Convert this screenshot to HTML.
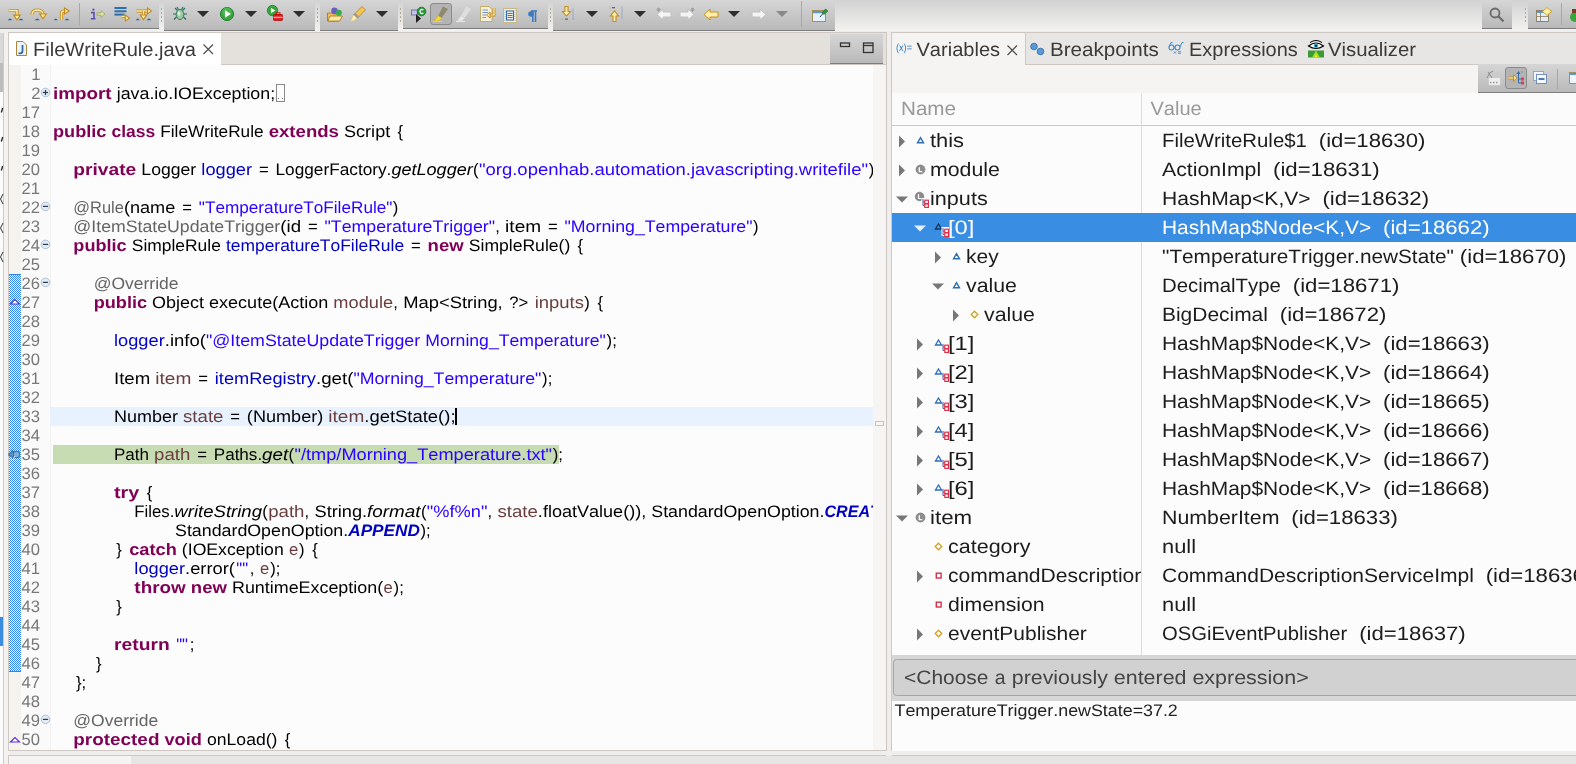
<!DOCTYPE html>
<html><head><meta charset="utf-8"><style>
html,body{margin:0;padding:0;width:1576px;height:764px;overflow:hidden;background:#efeeec}
svg{display:block;will-change:transform}
text{font-family:"Liberation Sans",sans-serif;white-space:pre;font-kerning:none}
</style></head><body>
<svg width="1576" height="764" viewBox="0 0 1576 764" text-rendering="geometricPrecision">
<defs>
<linearGradient id="tbg" x1="0" y1="0" x2="0" y2="1"><stop offset="0" stop-color="#d2d2d2"/><stop offset="1" stop-color="#f3f2f1"/></linearGradient>
<linearGradient id="grp" x1="0" y1="0" x2="0" y2="1"><stop offset="0" stop-color="#d6d6d6"/><stop offset="1" stop-color="#b8b8b8"/></linearGradient>
<pattern id="chk" width="2" height="2" patternUnits="userSpaceOnUse"><rect width="2" height="2" fill="#ffffff"/><rect width="1" height="1" fill="#2f86e8"/><rect x="1" y="1" width="1" height="1" fill="#2f86e8"/></pattern>
<clipPath id="codeclip"><rect x="50" y="65" width="823" height="685"/></clipPath>
<clipPath id="nameclip"><rect x="892" y="93" width="249" height="562"/></clipPath>
<clipPath id="valclip"><rect x="1142" y="93" width="434" height="562"/></clipPath>
</defs>
<rect x="0" y="0" width="1576" height="764" fill="#efeeec" shape-rendering="crispEdges"/>
<rect x="0" y="0" width="1576" height="31" fill="url(#tbg)" shape-rendering="crispEdges"/>
<rect x="0" y="31" width="1576" height="2" fill="#efeeec" shape-rendering="crispEdges"/>
<rect x="0" y="0" width="159" height="29" fill="url(#grp)" shape-rendering="crispEdges"/>
<rect x="0" y="28" width="159" height="1.2" fill="#7d7d7d" shape-rendering="crispEdges"/>
<rect x="164" y="0" width="151" height="31" fill="url(#grp)" shape-rendering="crispEdges"/>
<rect x="164" y="30" width="151" height="1.2" fill="#7d7d7d" shape-rendering="crispEdges"/>
<rect x="320" y="0" width="78" height="31" fill="url(#grp)" shape-rendering="crispEdges"/>
<rect x="320" y="30" width="78" height="1.2" fill="#7d7d7d" shape-rendering="crispEdges"/>
<rect x="403" y="0" width="145" height="29" fill="url(#grp)" shape-rendering="crispEdges"/>
<rect x="403" y="28" width="145" height="1.2" fill="#7d7d7d" shape-rendering="crispEdges"/>
<rect x="553" y="0" width="282" height="31" fill="url(#grp)" shape-rendering="crispEdges"/>
<rect x="553" y="30" width="282" height="1.2" fill="#7d7d7d" shape-rendering="crispEdges"/>
<rect x="1482" y="0" width="30" height="29" fill="url(#grp)" shape-rendering="crispEdges"/>
<rect x="1482" y="28" width="30" height="1.2" fill="#7d7d7d" shape-rendering="crispEdges"/>
<rect x="1528" y="0" width="48" height="29" fill="url(#grp)" shape-rendering="crispEdges"/>
<rect x="1528" y="28" width="48" height="1.2" fill="#7d7d7d" shape-rendering="crispEdges"/>
<rect x="160.7" y="8.2" width="1.6" height="1.6" fill="#b3a995" shape-rendering="crispEdges"/>
<rect x="160.7" y="12.2" width="1.6" height="1.6" fill="#b3a995" shape-rendering="crispEdges"/>
<rect x="160.7" y="16.2" width="1.6" height="1.6" fill="#b3a995" shape-rendering="crispEdges"/>
<rect x="160.7" y="20.2" width="1.6" height="1.6" fill="#b3a995" shape-rendering="crispEdges"/>
<rect x="316.7" y="8.2" width="1.6" height="1.6" fill="#b3a995" shape-rendering="crispEdges"/>
<rect x="316.7" y="12.2" width="1.6" height="1.6" fill="#b3a995" shape-rendering="crispEdges"/>
<rect x="316.7" y="16.2" width="1.6" height="1.6" fill="#b3a995" shape-rendering="crispEdges"/>
<rect x="316.7" y="20.2" width="1.6" height="1.6" fill="#b3a995" shape-rendering="crispEdges"/>
<rect x="399.7" y="8.2" width="1.6" height="1.6" fill="#b3a995" shape-rendering="crispEdges"/>
<rect x="399.7" y="12.2" width="1.6" height="1.6" fill="#b3a995" shape-rendering="crispEdges"/>
<rect x="399.7" y="16.2" width="1.6" height="1.6" fill="#b3a995" shape-rendering="crispEdges"/>
<rect x="399.7" y="20.2" width="1.6" height="1.6" fill="#b3a995" shape-rendering="crispEdges"/>
<rect x="549.7" y="8.2" width="1.6" height="1.6" fill="#b3a995" shape-rendering="crispEdges"/>
<rect x="549.7" y="12.2" width="1.6" height="1.6" fill="#b3a995" shape-rendering="crispEdges"/>
<rect x="549.7" y="16.2" width="1.6" height="1.6" fill="#b3a995" shape-rendering="crispEdges"/>
<rect x="549.7" y="20.2" width="1.6" height="1.6" fill="#b3a995" shape-rendering="crispEdges"/>
<rect x="1524.7" y="8.2" width="1.6" height="1.6" fill="#b3a995" shape-rendering="crispEdges"/>
<rect x="1524.7" y="12.2" width="1.6" height="1.6" fill="#b3a995" shape-rendering="crispEdges"/>
<rect x="1524.7" y="16.2" width="1.6" height="1.6" fill="#b3a995" shape-rendering="crispEdges"/>
<rect x="1524.7" y="20.2" width="1.6" height="1.6" fill="#b3a995" shape-rendering="crispEdges"/>
<line x1="79.5" y1="3" x2="79.5" y2="25" stroke="#a8a8a8" stroke-width="1" shape-rendering="crispEdges"/>
<g transform="translate(8,7)"><path d="M0.5 3.5 H9 V9" fill="none" stroke="#c68a1c" stroke-width="3.2" stroke-linecap="butt" stroke-linejoin="miter"/><path d="M0.5 3.5 H9 V9" fill="none" stroke="#fff0a8" stroke-width="1.4" stroke-linecap="butt" stroke-linejoin="miter"/><path d="M5.75 8.2 L12.25 8.2 L9 13.0 Z" fill="#fff0a8" stroke="#c68a1c" stroke-width="1.2" stroke-linejoin="miter"/><path d="M-0.3 13.2 Q2.0 9.6 4.3 13.2 Z" fill="#2f6aa8"/><path d="M10.7 13.2 Q13.0 9.6 15.3 13.2 Z" fill="#2f6aa8"/></g>
<g transform="translate(31,7)"><path d="M1 7.5 C1 1.5 12 1.5 12 7.5" fill="none" stroke="#c68a1c" stroke-width="3.2" stroke-linecap="butt" stroke-linejoin="miter"/><path d="M1 7.5 C1 1.5 12 1.5 12 7.5" fill="none" stroke="#fff0a8" stroke-width="1.4" stroke-linecap="butt" stroke-linejoin="miter"/><path d="M8.75 7 L15.25 7 L12 11.8 Z" fill="#fff0a8" stroke="#c68a1c" stroke-width="1.2" stroke-linejoin="miter"/><path d="M3.7 13.2 Q6.25 9.6 8.8 13.2 Z" fill="#2f6aa8"/></g>
<g transform="translate(54,7)"><path d="M-0.3 13.2 Q1.75 9.6 3.8 13.2 Z" fill="#2f6aa8"/><path d="M10.7 13.2 Q13.0 9.6 15.3 13.2 Z" fill="#2f6aa8"/><path d="M7.5 12.5 V6 Q7.5 4 10 4 H11" fill="none" stroke="#c68a1c" stroke-width="3.2" stroke-linecap="butt" stroke-linejoin="miter"/><path d="M7.5 12.5 V6 Q7.5 4 10 4 H11" fill="none" stroke="#fff0a8" stroke-width="1.4" stroke-linecap="butt" stroke-linejoin="miter"/><path d="M10.5 1 L15 4 L10.5 7 Z" fill="#fff0a8" stroke="#c68a1c" stroke-width="1.2"/></g>
<g transform="translate(90,7)"><path d="M1.5 5.5 H4 V11.5 M0.8 11.8 H5.5 M1 5.6 H4" stroke="#5a4fb0" stroke-width="1.6" fill="none"/><circle cx="3.4" cy="2.7" r="1.1" fill="#5a4fb0"/><path d="M7 5.8 H11 V3.5 L15 7 L11 10.5 V8.2 H7 Z" fill="#dfe3a0" stroke="#a2a86a" stroke-width="0.9"/></g>
<g transform="translate(114,7)"><rect x="0.5" y="0" width="12" height="2" fill="#2d6db0"/><rect x="0.5" y="3.3" width="12" height="2" fill="#2d6db0"/><rect x="0.5" y="6.6" width="10" height="2" fill="#2d6db0"/><path d="M7 10 Q10 8.5 12.5 10.5" fill="none" stroke="#c68a1c" stroke-width="3" stroke-linecap="butt" stroke-linejoin="miter"/><path d="M7 10 Q10 8.5 12.5 10.5" fill="none" stroke="#fff0a8" stroke-width="1.3" stroke-linecap="butt" stroke-linejoin="miter"/><path d="M11 8 L15.5 11 L11.5 14 Z" fill="#fff0a8" stroke="#c68a1c" stroke-width="1.1"/></g>
<g transform="translate(136,7)"><path d="M-0.3 13.2 Q1.75 9.6 3.8 13.2 Z" fill="#2f6aa8"/><path d="M10.7 13.2 Q13.0 9.6 15.3 13.2 Z" fill="#2f6aa8"/><path d="M0.5 4 H12" fill="none" stroke="#c68a1c" stroke-width="3.2" stroke-linecap="butt" stroke-linejoin="miter"/><path d="M0.5 4 H12" fill="none" stroke="#fff0a8" stroke-width="1.4" stroke-linecap="butt" stroke-linejoin="miter"/><path d="M7.5 4 V8.5" fill="none" stroke="#c68a1c" stroke-width="3.2" stroke-linecap="butt" stroke-linejoin="miter"/><path d="M7.5 4 V8.5" fill="none" stroke="#fff0a8" stroke-width="1.4" stroke-linecap="butt" stroke-linejoin="miter"/><path d="M4.35 8 L10.65 8 L7.5 12.6 Z" fill="#fff0a8" stroke="#c68a1c" stroke-width="1.2" stroke-linejoin="miter"/><path d="M11.5 1 L15.5 4 L11.5 7 Z" fill="#fff0a8" stroke="#c68a1c" stroke-width="1.1"/></g>
<g transform="translate(172,6)"><path d="M3 2 L5.5 4.5 M13 2 L10.5 4.5 M1 8 H4 M15 8 H12 M2 13.5 L4.5 11 M14 13.5 L11.5 11 M5 1 L6.5 3.5 M11 1 L9.5 3.5" stroke="#1e6e5e" stroke-width="1.1"/><ellipse cx="8" cy="8.5" rx="3.8" ry="5" fill="#9ec9a0" stroke="#2a7a66" stroke-width="1"/><ellipse cx="7" cy="7.5" rx="1.5" ry="2.3" fill="#d8eed0"/></g>
<path d="M197 11 H209 L203 17 Z" fill="#2e2e2e"/>
<g transform="translate(220,7)"><circle cx="7" cy="7" r="6.6" fill="#3aa640" stroke="#1d7a2a" stroke-width="0.9"/><circle cx="7" cy="5" r="4.6" fill="#5cc060" opacity="0.6"/><path d="M5 3.2 L10.8 7 L5 10.8 Z" fill="#fff"/></g>
<path d="M245 11 H257 L251 17 Z" fill="#2e2e2e"/>
<g transform="translate(267,5)"><circle cx="5.5" cy="5.5" r="5.2" fill="#3aa640" stroke="#1d7a2a" stroke-width="0.8"/><path d="M4 3 L8.3 5.5 L4 8 Z" fill="#fff"/><rect x="6.5" y="9.5" width="9" height="6" rx="0.8" fill="#e02020" stroke="#a00" stroke-width="0.7"/><rect x="9" y="7.8" width="4" height="2" fill="none" stroke="#c00" stroke-width="0.9"/><line x1="6.5" y1="12.3" x2="15.5" y2="12.3" stroke="#fff" stroke-width="0.8"/></g>
<path d="M293 11 H305 L299 17 Z" fill="#2e2e2e"/>
<g transform="translate(327,7)"><path d="M0.5 6 H5 L6 7 H12 V14 H0.5 Z" fill="#f0c060" stroke="#b07820" stroke-width="0.9"/><path d="M0.8 14 L3 9 H15.5 L12.5 14 Z" fill="#ffe8a8" stroke="#b07820" stroke-width="0.9"/><circle cx="7.5" cy="3.8" r="3.2" fill="#6a5cc0"/><circle cx="11.8" cy="5.8" r="3" fill="#3aa850"/></g>
<g transform="translate(350,6)"><path d="M12 0.5 L15.5 4 L7 12.5 L3.5 9 Z" fill="#f3c552" stroke="#b48a22" stroke-width="0.9"/><path d="M5.5 7 L9 10.5 L7 12.5 L3.5 9 Z" fill="#9a9a9a"/><path d="M3.5 9 L7 12.5 L1 15.5 Z" fill="#fff6c0" stroke="#e8d070" stroke-width="0.6"/></g>
<path d="M376 11 H388 L382 17 Z" fill="#2e2e2e"/>
<g transform="translate(411,7)"><rect x="0.5" y="3" width="6" height="5" fill="#b9c6ea" stroke="#7a5a9a" stroke-width="0.8"/><path d="M5 7 L10 11.5 L5 16 Z" fill="#222"/><circle cx="10.5" cy="4.5" r="4.3" fill="#2a9a3a" stroke="#176a24" stroke-width="0.8"/><path d="M12.3 3 A2 2 0 1 0 12.3 6" stroke="#fff" stroke-width="1.2" fill="none"/></g>
<rect x="430.5" y="3.5" width="21" height="21" rx="2.5" fill="#b4b4b4" stroke="#8c8c8c" stroke-width="1"/>
<g transform="translate(433,6)"><path d="M10 0.5 L15 3 L8.5 12 L5 10 Z" fill="#8c8468" opacity="0.9"/><path d="M5 9.5 L9 12 L6 15 H1 Z" fill="#f1d640" stroke="#c9a820" stroke-width="0.6"/><line x1="0" y1="15.5" x2="9" y2="15.5" stroke="#f1d640" stroke-width="1"/></g>
<g transform="translate(456,6)"><path d="M10 0.5 L15 3 L8.5 12 L5 10 Z" fill="#e0e0e0" opacity="0.9"/><path d="M5 9.5 L9 12 L6 15 H1 Z" fill="#e8e8e8" stroke="#c8c8c8" stroke-width="0.6"/><line x1="0" y1="15.5" x2="9" y2="15.5" stroke="#e8e8e8" stroke-width="1"/></g>
<g transform="translate(480,6)"><path d="M0.5 0.5 H9 L12 3.5 V15.5 H0.5 Z" fill="#f4f0dc" stroke="#c0a860" stroke-width="0.9"/><path d="M2.5 4 H8 M2.5 6.5 H8 M2.5 9 H6 M2.5 11.5 H6" stroke="#6a8ac8" stroke-width="0.9"/><path d="M14 2 V9 H9" fill="none" stroke="#c68a1c" stroke-width="2.8" stroke-linecap="butt" stroke-linejoin="miter"/><path d="M14 2 V9 H9" fill="none" stroke="#fff0a8" stroke-width="1.2" stroke-linecap="butt" stroke-linejoin="miter"/><path d="M10 6 L6.5 9 L10 12 Z" fill="#fff0a8" stroke="#c68a1c" stroke-width="1"/></g>
<g transform="translate(503,7)"><rect x="0.5" y="1.5" width="13" height="14" fill="#f2efe0" stroke="#c8b478" stroke-width="0.9"/><rect x="3.5" y="4" width="7" height="9" fill="none" stroke="#2d6db0" stroke-width="1.1"/><path d="M4.5 6.5 H9.5 M4.5 8.5 H9.5 M4.5 10.5 H9.5" stroke="#2d6db0" stroke-width="0.9"/><path d="M2 3 V14 M12 3 V14" stroke="#8aa8d0" stroke-width="0.8" stroke-dasharray="1 1"/></g>
<g transform="translate(526,8)"><path d="M5 3 H11 M6.8 3 V14 M9.5 3 V14" stroke="#3a7ac0" stroke-width="1.6"/><circle cx="5" cy="6" r="2.8" fill="#3a7ac0"/></g>
<g transform="translate(561,6)"><path d="M12 2 V14" stroke="#9aa8c0" stroke-width="0.9"/><path d="M1 14 V12 M13 14 V12" stroke="#9aa8c0" stroke-width="0.8"/><rect x="4" y="12.5" width="3" height="1.3" fill="#3a6ab0"/><path d="M4 0.5 H7 V5.5 H9.5 L5.5 10 L1.5 5.5 H4 Z" fill="#fff0a8" stroke="#c68a1c" stroke-width="1.1"/></g>
<path d="M586 11 H598 L592 17 Z" fill="#2e2e2e"/>
<g transform="translate(609,6)"><path d="M13 0.5 V13" stroke="#9aa8c0" stroke-width="0.9"/><rect x="3" y="1" width="3" height="1.3" fill="#3a6ab0"/><path d="M1 0.5 V3" stroke="#c8b478" stroke-width="0.8"/><path d="M7 3 V12" stroke="#c8d0e0" stroke-width="0.8" stroke-dasharray="1 1"/><path d="M4 15.5 H7 V10 H9.5 L5.5 5 L1.5 10 H4 Z" fill="#fff0a8" stroke="#c68a1c" stroke-width="1.1"/></g>
<path d="M634 11 H646 L640 17 Z" fill="#2e2e2e"/>
<g transform="translate(656,7)"><path d="M1 7.5 L7 2 V5 H15 V10 H7 V13 Z" fill="#f4f4f4" stroke="#c0c0c0" stroke-width="1" stroke-linejoin="round"/><path d="M2.5 0.5 V5 M0.5 2.7 H4.5 M1 1 L4 4 M4 1 L1 4" stroke="#999" stroke-width="0.8"/></g>
<g transform="translate(679,7)"><path d="M15 7.5 L9 2 V5 H1 V10 H9 V13 Z" fill="#f4f4f4" stroke="#c0c0c0" stroke-width="1" stroke-linejoin="round"/><path d="M13.5 0.5 V5 M11.5 2.7 H15.5 M12 1 L15 4 M15 1 L12 4" stroke="#999" stroke-width="0.8"/></g>
<g transform="translate(703,7)"><path d="M1 7.5 L7 2 V5 H15 V10 H7 V13 Z" fill="#fff0b0" stroke="#c8901a" stroke-width="1" stroke-linejoin="round"/></g>
<path d="M728 11 H740 L734 17 Z" fill="#2e2e2e"/>
<g transform="translate(751,7)"><path d="M15 7.5 L9 2 V5 H1 V10 H9 V13 Z" fill="#f4f4f4" stroke="#c0c0c0" stroke-width="1" stroke-linejoin="round"/></g>
<path d="M776 11 H788 L782 17 Z" fill="#8a8a8a"/>
<g transform="translate(812,8)"><rect x="0.5" y="2.5" width="13" height="11" fill="#e4f2fc" stroke="#a08850" stroke-width="0.9"/><rect x="1" y="3" width="12" height="2.2" fill="#5a96d0"/><path d="M8 9 L11 5.5" stroke="#333" stroke-width="0.9"/><path d="M10 5 L13.5 1 L16 3 L12 6.5 Z" fill="#2a9a3a" stroke="#1a6a20" stroke-width="0.6"/></g>
<g transform="translate(1489,7)"><circle cx="6" cy="6" r="4.5" fill="none" stroke="#6a6a6a" stroke-width="1.8"/><path d="M9.3 9.3 L14.5 14.5" stroke="#6a6a6a" stroke-width="2.2"/></g>
<g transform="translate(1536,7)"><rect x="0.5" y="3.5" width="12" height="11" fill="#dfeefa" stroke="#8a7a5a" stroke-width="0.9"/><rect x="1" y="4" width="11" height="2" fill="#5a96d0"/><path d="M4.5 6 V14 M1 9.5 H12" stroke="#8a7a5a" stroke-width="0.8"/><path d="M11 0.5 L13.5 3 L16 4.5 L13.5 6 L11 8.5 L8.5 6 L6 4.5 L8.5 3 Z" fill="#fff2a0" stroke="#c89a2a" stroke-width="0.9"/></g>
<g transform="translate(1569,6)"><circle cx="6" cy="11" r="5" fill="#3aa640"/><rect x="3" y="3" width="5" height="4" fill="#7a3a2a"/></g>
<line x1="801.5" y1="1" x2="801.5" y2="27" stroke="#a8a8a8" stroke-width="1" shape-rendering="crispEdges"/>
<line x1="1561.5" y1="3" x2="1561.5" y2="25" stroke="#a8a8a8" stroke-width="1" shape-rendering="crispEdges"/>
<rect x="0" y="33" width="3" height="30" fill="#d9d9d9" shape-rendering="crispEdges"/>
<rect x="0" y="63" width="3" height="29" fill="#bcbcbc" shape-rendering="crispEdges"/>
<rect x="0" y="92" width="3" height="660" fill="#fbfbfb" shape-rendering="crispEdges"/>
<rect x="0" y="617" width="3" height="28.5" fill="#3b8de2" shape-rendering="crispEdges"/>
<line x1="3.5" y1="33" x2="3.5" y2="764" stroke="#cfcac5" stroke-width="1" shape-rendering="crispEdges"/>
<path d="M2.6 108 Q2 111 1.2 112.5" stroke="#222" stroke-width="1.3" fill="none"/>
<path d="M2.6 137 Q2 140 1.2 141.5" stroke="#222" stroke-width="1.3" fill="none"/>
<path d="M2.6 166 Q2 169 1.2 170.5" stroke="#222" stroke-width="1.3" fill="none"/>
<path d="M3 194 L0.5 199 L3 204" stroke="#333" stroke-width="1" fill="none"/>
<path d="M3 223 L0.5 228 L3 233" stroke="#333" stroke-width="1" fill="none"/>
<path d="M3 252 L0.5 257 L3 262" stroke="#333" stroke-width="1" fill="none"/>
<rect x="4" y="33" width="4.5" height="731" fill="#f3f2f0" shape-rendering="crispEdges"/>
<rect x="8.5" y="32.5" width="878.0" height="718.0" fill="#fcfcfc" shape-rendering="crispEdges"/>
<rect x="9" y="33" width="877" height="31" fill="#e4e0dc" shape-rendering="crispEdges"/>
<line x1="9" y1="64.5" x2="886" y2="64.5" stroke="#cfc8c2" stroke-width="1" shape-rendering="crispEdges"/>
<rect x="9" y="33" width="212" height="32" fill="#ffffff" shape-rendering="crispEdges"/>
<rect x="830" y="34" width="53" height="30" fill="url(#grp)" shape-rendering="crispEdges"/>
<rect x="830" y="63" width="53" height="1" fill="#7d7d7d" shape-rendering="crispEdges"/>
<rect x="8.5" y="32.5" width="878.0" height="718.0" fill="none" stroke="#cfc8c2" stroke-width="1"/>
<rect x="9" y="65" width="12" height="685" fill="#f5f3f0" shape-rendering="crispEdges"/>
<rect x="21" y="65" width="29" height="685" fill="#fafafa" shape-rendering="crispEdges"/>
<line x1="50.5" y1="65" x2="50.5" y2="750" stroke="#f2f2f2" stroke-width="1" shape-rendering="crispEdges"/>
<rect x="873" y="65" width="13" height="685" fill="#f6f5f3" shape-rendering="crispEdges"/>
<text x="33.00" y="55.50" fill="#3a3a3a" font-size="19.42" textLength="162.85" lengthAdjust="spacingAndGlyphs">FileWriteRule.java</text>
<g transform="translate(16,41)"><path d="M0.5 0.5 H7 L10.5 4 V14.5 H0.5 Z" fill="#eef3fa" stroke="#a8863a" stroke-width="1"/><path d="M6.5 4 V10 Q6.5 12.3 4 12.3 H2.5" stroke="#2d6db0" stroke-width="1.8" fill="none"/></g>
<path d="M203.5 44.5 L213 54 M213 44.5 L203.5 54" stroke="#4a4a4a" stroke-width="1.1"/>
<rect x="840.5" y="43" width="9" height="3.5" fill="none" stroke="#333" stroke-width="1.3"/>
<rect x="863.5" y="43" width="9.5" height="9.5" fill="none" stroke="#333" stroke-width="1.3"/><line x1="863.5" y1="45.5" x2="873" y2="45.5" stroke="#333" stroke-width="1.3"/>
<rect x="50" y="407" width="823" height="19" fill="#e8f2fe" shape-rendering="crispEdges"/>
<rect x="53" y="445" width="506" height="19" fill="#c7dcb2" shape-rendering="crispEdges"/>
<rect x="9" y="274" width="12" height="398" fill="url(#chk)" shape-rendering="crispEdges"/>
<rect x="9" y="274" width="12" height="1" fill="#2f86e8" shape-rendering="crispEdges"/>
<rect x="9" y="671" width="12" height="1" fill="#2f86e8" shape-rendering="crispEdges"/>
<g clip-path="url(#codeclip)">
<text x="53.00" y="98.80" fill="#7f0055" font-size="16.64" textLength="58.65" lengthAdjust="spacingAndGlyphs" font-weight="bold">import</text>
<text x="116.72" y="98.80" fill="#000000" font-size="16.64" textLength="158.38" lengthAdjust="spacingAndGlyphs">java.io.IOException;</text>
<text x="53.00" y="136.80" fill="#7f0055" font-size="16.64" textLength="53.38" lengthAdjust="spacingAndGlyphs" font-weight="bold">public</text>
<text x="111.45" y="136.80" fill="#7f0055" font-size="16.64" textLength="43.71" lengthAdjust="spacingAndGlyphs" font-weight="bold">class</text>
<text x="160.23" y="136.80" fill="#000000" font-size="16.64" textLength="103.39" lengthAdjust="spacingAndGlyphs">FileWriteRule</text>
<text x="268.68" y="136.80" fill="#7f0055" font-size="16.64" textLength="70.28" lengthAdjust="spacingAndGlyphs" font-weight="bold">extends</text>
<text x="344.02" y="136.80" fill="#000000" font-size="16.64" textLength="46.19" lengthAdjust="spacingAndGlyphs">Script</text>
<text x="400.35" y="136.80" fill="#000000" font-size="16.64" text-anchor="middle">{</text>
<text x="73.34" y="174.80" fill="#7f0055" font-size="16.64" textLength="62.96" lengthAdjust="spacingAndGlyphs" font-weight="bold">private</text>
<text x="141.37" y="174.80" fill="#000000" font-size="16.64" textLength="54.90" lengthAdjust="spacingAndGlyphs">Logger</text>
<text x="201.34" y="174.80" fill="#0000c0" font-size="16.64" textLength="50.73" lengthAdjust="spacingAndGlyphs">logger</text>
<text x="263.80" y="174.80" fill="#000000" font-size="16.64" text-anchor="middle">=</text>
<text x="275.54" y="174.80" fill="#000000" font-size="16.64" textLength="115.87" lengthAdjust="spacingAndGlyphs">LoggerFactory.</text>
<text x="391.41" y="174.80" fill="#000000" font-size="16.64" textLength="81.33" lengthAdjust="spacingAndGlyphs" font-style="italic">getLogger</text>
<text x="475.85" y="174.80" fill="#000000" font-size="16.64" text-anchor="middle">(</text>
<text x="478.96" y="174.80" fill="#2a00ff" font-size="16.64" textLength="389.08" lengthAdjust="spacingAndGlyphs">&quot;org.openhab.automation.javascripting.writefile&quot;</text>
<text x="873.82" y="174.80" fill="#000000" font-size="16.64" text-anchor="middle">);</text>
<text x="73.34" y="212.80" fill="#646464" font-size="16.64" textLength="50.59" lengthAdjust="spacingAndGlyphs">@Rule</text>
<text x="123.93" y="212.80" fill="#000000" font-size="16.64" textLength="51.38" lengthAdjust="spacingAndGlyphs">(name</text>
<text x="187.05" y="212.80" fill="#000000" font-size="16.64" text-anchor="middle">=</text>
<text x="198.79" y="212.80" fill="#2a00ff" font-size="16.64" textLength="193.64" lengthAdjust="spacingAndGlyphs">&quot;TemperatureToFileRule&quot;</text>
<text x="395.53" y="212.80" fill="#000000" font-size="16.64" text-anchor="middle">)</text>
<text x="73.34" y="231.80" fill="#646464" font-size="16.64" textLength="206.94" lengthAdjust="spacingAndGlyphs">@ItemStateUpdateTrigger</text>
<text x="280.28" y="231.80" fill="#000000" font-size="16.64" textLength="20.76" lengthAdjust="spacingAndGlyphs">(id</text>
<text x="312.78" y="231.80" fill="#000000" font-size="16.64" text-anchor="middle">=</text>
<text x="324.52" y="231.80" fill="#2a00ff" font-size="16.64" textLength="170.46" lengthAdjust="spacingAndGlyphs">&quot;TemperatureTrigger&quot;</text>
<text x="497.51" y="231.80" fill="#000000" font-size="16.64" text-anchor="middle">,</text>
<text x="505.11" y="231.80" fill="#000000" font-size="16.64" textLength="35.99" lengthAdjust="spacingAndGlyphs">item</text>
<text x="552.84" y="231.80" fill="#000000" font-size="16.64" text-anchor="middle">=</text>
<text x="564.57" y="231.80" fill="#2a00ff" font-size="16.64" textLength="187.96" lengthAdjust="spacingAndGlyphs">&quot;Morning_Temperature&quot;</text>
<text x="755.65" y="231.80" fill="#000000" font-size="16.64" text-anchor="middle">)</text>
<text x="73.34" y="250.80" fill="#7f0055" font-size="16.64" textLength="53.38" lengthAdjust="spacingAndGlyphs" font-weight="bold">public</text>
<text x="131.79" y="250.80" fill="#000000" font-size="16.64" textLength="89.05" lengthAdjust="spacingAndGlyphs">SimpleRule</text>
<text x="225.91" y="250.80" fill="#0000c0" font-size="16.64" textLength="178.21" lengthAdjust="spacingAndGlyphs">temperatureToFileRule</text>
<text x="415.86" y="250.80" fill="#000000" font-size="16.64" text-anchor="middle">=</text>
<text x="427.60" y="250.80" fill="#7f0055" font-size="16.64" textLength="36.11" lengthAdjust="spacingAndGlyphs" font-weight="bold">new</text>
<text x="468.77" y="250.80" fill="#000000" font-size="16.64" textLength="101.49" lengthAdjust="spacingAndGlyphs">SimpleRule()</text>
<text x="580.40" y="250.80" fill="#000000" font-size="16.64" text-anchor="middle">{</text>
<text x="93.68" y="288.80" fill="#646464" font-size="16.64" textLength="84.81" lengthAdjust="spacingAndGlyphs">@Override</text>
<text x="93.68" y="307.80" fill="#7f0055" font-size="16.64" textLength="53.38" lengthAdjust="spacingAndGlyphs" font-weight="bold">public</text>
<text x="152.13" y="307.80" fill="#000000" font-size="16.64" textLength="51.86" lengthAdjust="spacingAndGlyphs">Object</text>
<text x="209.06" y="307.80" fill="#000000" font-size="16.64" textLength="119.24" lengthAdjust="spacingAndGlyphs">execute(Action</text>
<text x="333.38" y="307.80" fill="#6a3e3e" font-size="16.64" textLength="59.68" lengthAdjust="spacingAndGlyphs">module</text>
<text x="395.59" y="307.80" fill="#000000" font-size="16.64" text-anchor="middle">,</text>
<text x="403.20" y="307.80" fill="#000000" font-size="16.64" textLength="99.55" lengthAdjust="spacingAndGlyphs">Map&lt;String,</text>
<text x="518.71" y="307.80" fill="#000000" font-size="16.64" text-anchor="middle">?&gt;</text>
<text x="534.68" y="307.80" fill="#6a3e3e" font-size="16.64" textLength="49.27" lengthAdjust="spacingAndGlyphs">inputs</text>
<text x="587.05" y="307.80" fill="#000000" font-size="16.64" text-anchor="middle">)</text>
<text x="600.30" y="307.80" fill="#000000" font-size="16.64" text-anchor="middle">{</text>
<text x="114.02" y="345.80" fill="#0000c0" font-size="16.64" textLength="50.73" lengthAdjust="spacingAndGlyphs">logger</text>
<text x="164.75" y="345.80" fill="#000000" font-size="16.64" textLength="41.17" lengthAdjust="spacingAndGlyphs">.info(</text>
<text x="205.92" y="345.80" fill="#2a00ff" font-size="16.64" textLength="214.27" lengthAdjust="spacingAndGlyphs">&quot;@ItemStateUpdateTrigger</text>
<text x="425.25" y="345.80" fill="#2a00ff" font-size="16.64" textLength="180.64" lengthAdjust="spacingAndGlyphs">Morning_Temperature&quot;</text>
<text x="611.68" y="345.80" fill="#000000" font-size="16.64" text-anchor="middle">);</text>
<text x="114.02" y="383.80" fill="#000000" font-size="16.64" textLength="36.26" lengthAdjust="spacingAndGlyphs">Item</text>
<text x="155.34" y="383.80" fill="#6a3e3e" font-size="16.64" textLength="35.99" lengthAdjust="spacingAndGlyphs">item</text>
<text x="203.07" y="383.80" fill="#000000" font-size="16.64" text-anchor="middle">=</text>
<text x="214.81" y="383.80" fill="#0000c0" font-size="16.64" textLength="101.19" lengthAdjust="spacingAndGlyphs">itemRegistry</text>
<text x="316.01" y="383.80" fill="#000000" font-size="16.64" textLength="37.44" lengthAdjust="spacingAndGlyphs">.get(</text>
<text x="353.44" y="383.80" fill="#2a00ff" font-size="16.64" textLength="187.96" lengthAdjust="spacingAndGlyphs">&quot;Morning_Temperature&quot;</text>
<text x="547.19" y="383.80" fill="#000000" font-size="16.64" text-anchor="middle">);</text>
<text x="114.02" y="421.80" fill="#000000" font-size="16.64" textLength="63.96" lengthAdjust="spacingAndGlyphs">Number</text>
<text x="183.05" y="421.80" fill="#6a3e3e" font-size="16.64" textLength="40.36" lengthAdjust="spacingAndGlyphs">state</text>
<text x="235.15" y="421.80" fill="#000000" font-size="16.64" text-anchor="middle">=</text>
<text x="246.88" y="421.80" fill="#000000" font-size="16.64" textLength="76.40" lengthAdjust="spacingAndGlyphs">(Number)</text>
<text x="328.35" y="421.80" fill="#6a3e3e" font-size="16.64" textLength="35.99" lengthAdjust="spacingAndGlyphs">item</text>
<text x="364.34" y="421.80" fill="#000000" font-size="16.64" textLength="91.18" lengthAdjust="spacingAndGlyphs">.getState();</text>
<text x="114.02" y="459.80" fill="#000000" font-size="16.64" textLength="35.00" lengthAdjust="spacingAndGlyphs">Path</text>
<text x="154.08" y="459.80" fill="#6a3e3e" font-size="16.64" textLength="36.21" lengthAdjust="spacingAndGlyphs">path</text>
<text x="202.03" y="459.80" fill="#000000" font-size="16.64" text-anchor="middle">=</text>
<text x="213.77" y="459.80" fill="#000000" font-size="16.64" textLength="48.37" lengthAdjust="spacingAndGlyphs">Paths.</text>
<text x="262.14" y="459.80" fill="#000000" font-size="16.64" textLength="26.15" lengthAdjust="spacingAndGlyphs" font-style="italic">get</text>
<text x="291.39" y="459.80" fill="#000000" font-size="16.64" text-anchor="middle">(</text>
<text x="294.50" y="459.80" fill="#2a00ff" font-size="16.64" textLength="257.55" lengthAdjust="spacingAndGlyphs">&quot;/tmp/Morning_Temperature.txt&quot;</text>
<text x="557.84" y="459.80" fill="#000000" font-size="16.64" text-anchor="middle">);</text>
<text x="114.02" y="497.80" fill="#7f0055" font-size="16.64" textLength="25.33" lengthAdjust="spacingAndGlyphs" font-weight="bold">try</text>
<text x="149.49" y="497.80" fill="#000000" font-size="16.64" text-anchor="middle">{</text>
<text x="134.36" y="516.80" fill="#000000" font-size="16.64" textLength="40.03" lengthAdjust="spacingAndGlyphs">Files.</text>
<text x="174.39" y="516.80" fill="#000000" font-size="16.64" textLength="87.58" lengthAdjust="spacingAndGlyphs" font-style="italic">writeString</text>
<text x="265.08" y="516.80" fill="#000000" font-size="16.64" text-anchor="middle">(</text>
<text x="268.19" y="516.80" fill="#6a3e3e" font-size="16.64" textLength="36.21" lengthAdjust="spacingAndGlyphs">path</text>
<text x="306.93" y="516.80" fill="#000000" font-size="16.64" text-anchor="middle">,</text>
<text x="314.53" y="516.80" fill="#000000" font-size="16.64" textLength="52.60" lengthAdjust="spacingAndGlyphs">String.</text>
<text x="367.13" y="516.80" fill="#000000" font-size="16.64" textLength="53.43" lengthAdjust="spacingAndGlyphs" font-style="italic">format</text>
<text x="423.67" y="516.80" fill="#000000" font-size="16.64" text-anchor="middle">(</text>
<text x="426.78" y="516.80" fill="#2a00ff" font-size="16.64" textLength="60.60" lengthAdjust="spacingAndGlyphs">&quot;%f%n&quot;</text>
<text x="489.92" y="516.80" fill="#000000" font-size="16.64" text-anchor="middle">,</text>
<text x="497.52" y="516.80" fill="#6a3e3e" font-size="16.64" textLength="40.36" lengthAdjust="spacingAndGlyphs">state</text>
<text x="537.88" y="516.80" fill="#000000" font-size="16.64" textLength="108.33" lengthAdjust="spacingAndGlyphs">.floatValue()),</text>
<text x="651.28" y="516.80" fill="#000000" font-size="16.64" textLength="173.19" lengthAdjust="spacingAndGlyphs">StandardOpenOption.</text>
<text x="824.47" y="516.80" fill="#0000c0" font-size="16.64" textLength="66.04" lengthAdjust="spacingAndGlyphs" font-weight="bold" font-style="italic">CREATE</text>
<text x="175.04" y="535.80" fill="#000000" font-size="16.64" textLength="173.19" lengthAdjust="spacingAndGlyphs">StandardOpenOption.</text>
<text x="348.23" y="535.80" fill="#0000c0" font-size="16.64" textLength="71.63" lengthAdjust="spacingAndGlyphs" font-weight="bold" font-style="italic">APPEND</text>
<text x="425.66" y="535.80" fill="#000000" font-size="16.64" text-anchor="middle">);</text>
<text x="119.09" y="554.80" fill="#000000" font-size="16.64" text-anchor="middle">}</text>
<text x="129.22" y="554.80" fill="#7f0055" font-size="16.64" textLength="47.59" lengthAdjust="spacingAndGlyphs" font-weight="bold">catch</text>
<text x="181.89" y="554.80" fill="#000000" font-size="16.64" textLength="101.82" lengthAdjust="spacingAndGlyphs">(IOException</text>
<text x="293.67" y="554.80" fill="#6a3e3e" font-size="16.64" text-anchor="middle">e</text>
<text x="301.67" y="554.80" fill="#000000" font-size="16.64" text-anchor="middle">)</text>
<text x="314.92" y="554.80" fill="#000000" font-size="16.64" text-anchor="middle">{</text>
<text x="134.36" y="573.80" fill="#0000c0" font-size="16.64" textLength="50.73" lengthAdjust="spacingAndGlyphs">logger</text>
<text x="185.09" y="573.80" fill="#000000" font-size="16.64" textLength="49.84" lengthAdjust="spacingAndGlyphs">.error(</text>
<text x="242.26" y="573.80" fill="#2a00ff" font-size="16.64" text-anchor="middle">&quot;&quot;</text>
<text x="252.11" y="573.80" fill="#000000" font-size="16.64" text-anchor="middle">,</text>
<text x="264.61" y="573.80" fill="#6a3e3e" font-size="16.64" text-anchor="middle">e</text>
<text x="275.30" y="573.80" fill="#000000" font-size="16.64" text-anchor="middle">);</text>
<text x="134.36" y="592.80" fill="#7f0055" font-size="16.64" textLength="51.40" lengthAdjust="spacingAndGlyphs" font-weight="bold">throw</text>
<text x="190.83" y="592.80" fill="#7f0055" font-size="16.64" textLength="36.11" lengthAdjust="spacingAndGlyphs" font-weight="bold">new</text>
<text x="232.00" y="592.80" fill="#000000" font-size="16.64" textLength="151.12" lengthAdjust="spacingAndGlyphs">RuntimeException(</text>
<text x="388.02" y="592.80" fill="#6a3e3e" font-size="16.64" text-anchor="middle">e</text>
<text x="398.70" y="592.80" fill="#000000" font-size="16.64" text-anchor="middle">);</text>
<text x="119.09" y="611.80" fill="#000000" font-size="16.64" text-anchor="middle">}</text>
<text x="114.02" y="649.80" fill="#7f0055" font-size="16.64" textLength="55.65" lengthAdjust="spacingAndGlyphs" font-weight="bold">return</text>
<text x="182.06" y="649.80" fill="#2a00ff" font-size="16.64" text-anchor="middle">&quot;&quot;</text>
<text x="192.07" y="649.80" fill="#000000" font-size="16.64" text-anchor="middle">;</text>
<text x="98.75" y="668.80" fill="#000000" font-size="16.64" text-anchor="middle">}</text>
<text x="81.09" y="687.80" fill="#000000" font-size="16.64" text-anchor="middle">};</text>
<text x="73.34" y="725.80" fill="#646464" font-size="16.64" textLength="84.81" lengthAdjust="spacingAndGlyphs">@Override</text>
<text x="73.34" y="744.80" fill="#7f0055" font-size="16.64" textLength="86.10" lengthAdjust="spacingAndGlyphs" font-weight="bold">protected</text>
<text x="164.51" y="744.80" fill="#7f0055" font-size="16.64" textLength="37.42" lengthAdjust="spacingAndGlyphs" font-weight="bold">void</text>
<text x="207.00" y="744.80" fill="#000000" font-size="16.64" textLength="70.49" lengthAdjust="spacingAndGlyphs">onLoad()</text>
<text x="287.62" y="744.80" fill="#000000" font-size="16.64" text-anchor="middle">{</text>
</g>
<text x="35.93" y="79.80" fill="#787878" font-size="16.64" text-anchor="middle">1</text>
<text x="35.93" y="98.80" fill="#787878" font-size="16.64" text-anchor="middle">2</text>
<text x="30.86" y="117.80" fill="#787878" font-size="16.64" text-anchor="middle">17</text>
<text x="30.86" y="136.80" fill="#787878" font-size="16.64" text-anchor="middle">18</text>
<text x="30.86" y="155.80" fill="#787878" font-size="16.64" text-anchor="middle">19</text>
<text x="30.86" y="174.80" fill="#787878" font-size="16.64" text-anchor="middle">20</text>
<text x="30.86" y="193.80" fill="#787878" font-size="16.64" text-anchor="middle">21</text>
<text x="30.86" y="212.80" fill="#787878" font-size="16.64" text-anchor="middle">22</text>
<text x="30.86" y="231.80" fill="#787878" font-size="16.64" text-anchor="middle">23</text>
<text x="30.86" y="250.80" fill="#787878" font-size="16.64" text-anchor="middle">24</text>
<text x="30.86" y="269.80" fill="#787878" font-size="16.64" text-anchor="middle">25</text>
<text x="30.86" y="288.80" fill="#787878" font-size="16.64" text-anchor="middle">26</text>
<text x="30.86" y="307.80" fill="#787878" font-size="16.64" text-anchor="middle">27</text>
<text x="30.86" y="326.80" fill="#787878" font-size="16.64" text-anchor="middle">28</text>
<text x="30.86" y="345.80" fill="#787878" font-size="16.64" text-anchor="middle">29</text>
<text x="30.86" y="364.80" fill="#787878" font-size="16.64" text-anchor="middle">30</text>
<text x="30.86" y="383.80" fill="#787878" font-size="16.64" text-anchor="middle">31</text>
<text x="30.86" y="402.80" fill="#787878" font-size="16.64" text-anchor="middle">32</text>
<text x="30.86" y="421.80" fill="#787878" font-size="16.64" text-anchor="middle">33</text>
<text x="30.86" y="440.80" fill="#787878" font-size="16.64" text-anchor="middle">34</text>
<text x="30.86" y="459.80" fill="#787878" font-size="16.64" text-anchor="middle">35</text>
<text x="30.86" y="478.80" fill="#787878" font-size="16.64" text-anchor="middle">36</text>
<text x="30.86" y="497.80" fill="#787878" font-size="16.64" text-anchor="middle">37</text>
<text x="30.86" y="516.80" fill="#787878" font-size="16.64" text-anchor="middle">38</text>
<text x="30.86" y="535.80" fill="#787878" font-size="16.64" text-anchor="middle">39</text>
<text x="30.86" y="554.80" fill="#787878" font-size="16.64" text-anchor="middle">40</text>
<text x="30.86" y="573.80" fill="#787878" font-size="16.64" text-anchor="middle">41</text>
<text x="30.86" y="592.80" fill="#787878" font-size="16.64" text-anchor="middle">42</text>
<text x="30.86" y="611.80" fill="#787878" font-size="16.64" text-anchor="middle">43</text>
<text x="30.86" y="630.80" fill="#787878" font-size="16.64" text-anchor="middle">44</text>
<text x="30.86" y="649.80" fill="#787878" font-size="16.64" text-anchor="middle">45</text>
<text x="30.86" y="668.80" fill="#787878" font-size="16.64" text-anchor="middle">46</text>
<text x="30.86" y="687.80" fill="#787878" font-size="16.64" text-anchor="middle">47</text>
<text x="30.86" y="706.80" fill="#787878" font-size="16.64" text-anchor="middle">48</text>
<text x="30.86" y="725.80" fill="#787878" font-size="16.64" text-anchor="middle">49</text>
<text x="30.86" y="744.80" fill="#787878" font-size="16.64" text-anchor="middle">50</text>
<circle cx="45.5" cy="92.5" r="4.3" fill="#e2ebf4" stroke="#a9bdd2" stroke-width="0.9"/><path d="M42.9 92.5 H48.1" stroke="#2a3a5a" stroke-width="1.2"/><path d="M45.5 89.9 V95.1" stroke="#2a3a5a" stroke-width="1.2"/>
<circle cx="45.5" cy="206.4" r="4.3" fill="#e2ebf4" stroke="#a9bdd2" stroke-width="0.9"/><path d="M42.9 206.4 H48.1" stroke="#2a3a5a" stroke-width="1.2"/>
<circle cx="45.5" cy="244.4" r="4.3" fill="#e2ebf4" stroke="#a9bdd2" stroke-width="0.9"/><path d="M42.9 244.4 H48.1" stroke="#2a3a5a" stroke-width="1.2"/>
<circle cx="45.5" cy="282.4" r="4.3" fill="#e2ebf4" stroke="#a9bdd2" stroke-width="0.9"/><path d="M42.9 282.4 H48.1" stroke="#2a3a5a" stroke-width="1.2"/>
<circle cx="45.5" cy="719.4" r="4.3" fill="#e2ebf4" stroke="#a9bdd2" stroke-width="0.9"/><path d="M42.9 719.4 H48.1" stroke="#2a3a5a" stroke-width="1.2"/>
<path d="M10.5 304 L15 299.5 L19.5 304 Z" fill="#fff" stroke="#5a2ad0" stroke-width="1.1"/>
<path d="M10.5 742 L15 737.5 L19.5 742 Z" fill="#fff" stroke="#5a2ad0" stroke-width="1.1"/>
<g transform="translate(9,449)"><path d="M0 4 H3 V1 L8 5.5 L3 10 V7 H0 Z" fill="#6aa0d0" stroke="#1a5a9a" stroke-width="0.9"/><circle cx="7.5" cy="5.5" r="3.4" fill="#7ab0d8" stroke="#245a8a" stroke-width="0.9"/><path d="M1.5 8 L3.5 11 L6 7" stroke="#fff" stroke-width="0.9" fill="none"/></g>
<rect x="455" y="408" width="1.5" height="17" fill="#000" shape-rendering="crispEdges"/>
<rect x="276.5" y="84.5" width="8" height="17" fill="none" stroke="#8a8a8a" stroke-width="1"/><rect x="278" y="98" width="1" height="1" fill="#777"/><rect x="282" y="98" width="1" height="1" fill="#777"/>
<rect x="875.5" y="421.5" width="8" height="4" fill="none" stroke="#b6d39a" stroke-width="1"/>
<rect x="892" y="33" width="684" height="718" fill="#fcfcfc" shape-rendering="crispEdges"/>
<rect x="892" y="33" width="684" height="31" fill="#e8e6e4" shape-rendering="crispEdges"/>
<rect x="892" y="33" width="133" height="32" fill="#f6f4f2" shape-rendering="crispEdges"/>
<line x1="1025" y1="64.5" x2="1576" y2="64.5" stroke="#cfc8c2" stroke-width="1" shape-rendering="crispEdges"/>
<line x1="1025.5" y1="33" x2="1025.5" y2="64" stroke="#cfc8c2" stroke-width="1" shape-rendering="crispEdges"/>
<rect x="892" y="65" width="684" height="28" fill="#f6f4f2" shape-rendering="crispEdges"/>
<rect x="1478" y="64" width="98" height="29" fill="url(#grp)" shape-rendering="crispEdges"/>
<rect x="1478" y="92" width="98" height="1" fill="#7d7d7d" shape-rendering="crispEdges"/>
<rect x="891.5" y="32.5" width="700" height="718" fill="none" stroke="#cfc8c2" stroke-width="1"/>
<text x="916.50" y="55.50" fill="#3a3a3a" font-size="19.42" textLength="83.58" lengthAdjust="spacingAndGlyphs">Variables</text>
<g transform="translate(896,41)"><text x="0" y="10" font-size="10.5" fill="#2a7ac0" font-family="Liberation Sans" textLength="16" lengthAdjust="spacingAndGlyphs">(x)=</text></g>
<g transform="translate(1030,42)"><circle cx="4" cy="4.5" r="3.3" fill="#5a9ad8" stroke="#2a6aa8" stroke-width="0.8"/><circle cx="10.5" cy="9.5" r="3.3" fill="#5a9ad8" stroke="#2a6aa8" stroke-width="0.8"/></g>
<g transform="translate(1168,41)"><circle cx="3.5" cy="6.5" r="2.5" fill="none" stroke="#3a8ad0" stroke-width="1.1"/><circle cx="9.5" cy="6.5" r="2.5" fill="none" stroke="#3a8ad0" stroke-width="1.1"/><path d="M6 6.3 H7 M1 6 L3 1.5 H4.5 M12 6 L14 1.5 H15.5" stroke="#3a8ad0" stroke-width="1" fill="none"/><path d="M6 10.5 L8 12.5 M8 10.5 L6 12.5 M10 10.8 H13 M10 12.3 H13" stroke="#3a8ad0" stroke-width="0.9"/></g>
<g transform="translate(1308,41)"><rect x="0" y="9.5" width="16" height="7" fill="#3a9a3a"/><path d="M4 16.5 L8 9.5 L12 16.5 Z" fill="#9ae020"/><path d="M6.5 16.5 L8 13 L9.5 16.5 Z" fill="#f0f020"/><path d="M0.5 5 Q8 -1 15.5 5 Q8 10 0.5 5 Z" fill="#fff" stroke="#000" stroke-width="1.2"/><circle cx="8" cy="4.8" r="2.3" fill="#30b0d0"/><circle cx="8" cy="4.8" r="1" fill="#000"/><path d="M2 1.5 Q8 -2.5 14 1.5" stroke="#000" stroke-width="1" fill="none"/></g>
<g transform="translate(1485,70)"><rect x="4" y="8" width="11" height="7" fill="#eee" stroke="#ddd" stroke-width="0.6"/><path d="M2 8 Q4 2 8 1 M3 2 L7 8" stroke="#8a8a8a" stroke-width="1" fill="none"/><path d="M5 12.5 H6.5 M8 12.5 H9.5 M11 12.5 H12.5" stroke="#9a9a9a" stroke-width="1.4"/></g>
<rect x="1505.5" y="67.5" width="21" height="21" rx="2.5" fill="#b4b4b4" stroke="#8c8c8c" stroke-width="1"/>
<g transform="translate(1508,70)"><path d="M0.5 8 H6" fill="none" stroke="#c68a1c" stroke-width="2.8" stroke-linecap="butt" stroke-linejoin="miter"/><path d="M0.5 8 H6" fill="none" stroke="#fff0a8" stroke-width="1.2" stroke-linecap="butt" stroke-linejoin="miter"/><path d="M5.5 4.8 L9 8 L5.5 11.2 Z" fill="#fff0a8" stroke="#c68a1c" stroke-width="1"/><path d="M10.5 4 V13 H13 M10.5 9 H13" stroke="#3a6ab0" stroke-width="1" fill="none"/><path d="M8.5 4 L10.5 1 L12.5 4 Z" fill="#3a6ab0"/><rect x="13" y="7.5" width="3" height="3" fill="#e04050"/><rect x="13" y="11.5" width="3" height="3" fill="#e04050"/><path d="M13 2 H15" stroke="#6a8ac8" stroke-width="0.8"/></g>
<g transform="translate(1533,71)"><rect x="0.5" y="0.5" width="10" height="9" fill="#eef5fd" stroke="#8aa0c8" stroke-width="0.9"/><rect x="3.5" y="3.5" width="10" height="9" fill="#f4f9ff" stroke="#6a86b8" stroke-width="0.9"/><path d="M5.5 8 H11.5" stroke="#1a4a9a" stroke-width="1.5"/></g>
<line x1="1557.5" y1="69" x2="1557.5" y2="89" stroke="#a8a8a8" stroke-width="1" shape-rendering="crispEdges"/>
<g transform="translate(1569,69)"><rect x="0.5" y="3.5" width="12" height="11" fill="#eef6fd" stroke="#a08850" stroke-width="0.9"/><rect x="1" y="4" width="11" height="2" fill="#5a96d0"/></g>
<path d="M1007.5 45.5 L1017 55 M1017 45.5 L1007.5 55" stroke="#4a4a4a" stroke-width="1.1"/>
<text x="1050.00" y="55.50" fill="#3a3a3a" font-size="19.42" textLength="108.87" lengthAdjust="spacingAndGlyphs">Breakpoints</text>
<text x="1189.00" y="55.50" fill="#3a3a3a" font-size="19.42" textLength="108.80" lengthAdjust="spacingAndGlyphs">Expressions</text>
<text x="1328.00" y="55.50" fill="#3a3a3a" font-size="19.42" textLength="88.06" lengthAdjust="spacingAndGlyphs">Visualizer</text>
<rect x="892" y="93" width="684" height="32" fill="#fbfbfb" shape-rendering="crispEdges"/>
<line x1="892" y1="125.5" x2="1576" y2="125.5" stroke="#c8c8c8" stroke-width="1" shape-rendering="crispEdges"/>
<line x1="1141.5" y1="93" x2="1141.5" y2="655" stroke="#dcdcdc" stroke-width="1" shape-rendering="crispEdges"/>
<text x="901.00" y="114.70" fill="#999" font-size="19.42" textLength="55.05" lengthAdjust="spacingAndGlyphs">Name</text>
<text x="1150.50" y="114.70" fill="#999" font-size="19.42" textLength="51.25" lengthAdjust="spacingAndGlyphs">Value</text>
<path d="M899 135.5 L905 141.5 L899 147.5 Z" fill="#777"/>
<g transform="translate(912.5,132)"><path d="M5 10.8 L8 5.6 L11 10.8 Z" fill="#f4f8fc" stroke="#2c6fb6" stroke-width="1.4" stroke-linejoin="miter"/></g>
<g clip-path="url(#nameclip)">
<text x="930.00" y="147.20" fill="#1c1c1c" font-size="19.42" textLength="34.05" lengthAdjust="spacingAndGlyphs">this</text>
</g><g clip-path="url(#valclip)">
<text x="1162.00" y="147.20" fill="#1c1c1c" font-size="19.42" textLength="144.88" lengthAdjust="spacingAndGlyphs">FileWriteRule$1</text>
<text x="1318.75" y="147.20" fill="#1c1c1c" font-size="19.42" textLength="106.59" lengthAdjust="spacingAndGlyphs">(id=18630)</text>
</g>
<path d="M899 164.5 L905 170.5 L899 176.5 Z" fill="#777"/>
<g transform="translate(912.5,161)"><circle cx="8" cy="8.5" r="4.5" fill="#8e8e8e" stroke="#6e6e6e" stroke-width="0.6"/><path d="M6.8 6.2 V10.6 H9.8" stroke="#fff" stroke-width="1.3" fill="none"/></g>
<g clip-path="url(#nameclip)">
<text x="930.00" y="176.20" fill="#1c1c1c" font-size="19.42" textLength="69.94" lengthAdjust="spacingAndGlyphs">module</text>
</g><g clip-path="url(#valclip)">
<text x="1162.00" y="176.20" fill="#1c1c1c" font-size="19.42" textLength="99.14" lengthAdjust="spacingAndGlyphs">ActionImpl</text>
<text x="1273.02" y="176.20" fill="#1c1c1c" font-size="19.42" textLength="106.59" lengthAdjust="spacingAndGlyphs">(id=18631)</text>
</g>
<path d="M896 196.5 L908 196.5 L902 202.5 Z" fill="#777"/>
<g transform="translate(912.5,190)"><circle cx="7" cy="6.5" r="4.3" fill="#8c8c8c" stroke="#707070" stroke-width="0.6"/><path d="M6 4.3 V8.5 H8.6" stroke="#fff" stroke-width="1.2" fill="none"/></g>
<g transform="translate(912.5,190)"><rect x="9" y="8" width="7.5" height="9" fill="#fff"/><path d="M10.5 9 V15.5 H12.5 M10.5 12 H12.5" stroke="#3a5ab0" stroke-width="1" fill="none"/><rect x="12.3" y="10.2" width="3.6" height="3.4" fill="#fff" stroke="#e03048" stroke-width="1.2"/><rect x="12.3" y="14" width="3.6" height="3.4" fill="#fff" stroke="#e03048" stroke-width="1.2"/></g>
<g clip-path="url(#nameclip)">
<text x="930.00" y="205.20" fill="#1c1c1c" font-size="19.42" textLength="57.72" lengthAdjust="spacingAndGlyphs">inputs</text>
</g><g clip-path="url(#valclip)">
<text x="1162.00" y="205.20" fill="#1c1c1c" font-size="19.42" textLength="148.58" lengthAdjust="spacingAndGlyphs">HashMap&lt;K,V&gt;</text>
<text x="1322.45" y="205.20" fill="#1c1c1c" font-size="19.42" textLength="106.59" lengthAdjust="spacingAndGlyphs">(id=18632)</text>
</g>
<rect x="892" y="213" width="684" height="28.5" fill="#398de2" shape-rendering="crispEdges"/>
<path d="M914 225.5 L926 225.5 L920 231.5 Z" fill="#e8f0fb"/>
<g transform="translate(932.5,219)"><path d="M3 10 L6 5 L9 10 Z" fill="none" stroke="#17325a" stroke-width="1.3"/></g><g transform="translate(932.5,219)"><rect x="9" y="8" width="7.5" height="9" fill="#fff"/><path d="M10.5 9 V15.5 H12.5 M10.5 12 H12.5" stroke="#3a5ab0" stroke-width="1" fill="none"/><rect x="12.3" y="10.2" width="3.6" height="3.4" fill="#fff" stroke="#e03048" stroke-width="1.2"/><rect x="12.3" y="14" width="3.6" height="3.4" fill="#fff" stroke="#e03048" stroke-width="1.2"/></g>
<g clip-path="url(#nameclip)">
<text x="948.00" y="234.20" fill="#fff" font-size="19.42" textLength="26.44" lengthAdjust="spacingAndGlyphs">[0]</text>
</g><g clip-path="url(#valclip)">
<text x="1162.00" y="234.20" fill="#fff" font-size="19.42" textLength="209.16" lengthAdjust="spacingAndGlyphs">HashMap$Node&lt;K,V&gt;</text>
<text x="1383.03" y="234.20" fill="#fff" font-size="19.42" textLength="106.59" lengthAdjust="spacingAndGlyphs">(id=18662)</text>
</g>
<path d="M935 251.5 L941 257.5 L935 263.5 Z" fill="#777"/>
<g transform="translate(948.5,248)"><path d="M5 10.8 L8 5.6 L11 10.8 Z" fill="#f4f8fc" stroke="#2c6fb6" stroke-width="1.4" stroke-linejoin="miter"/></g>
<g clip-path="url(#nameclip)">
<text x="966.00" y="263.20" fill="#1c1c1c" font-size="19.42" textLength="32.66" lengthAdjust="spacingAndGlyphs">key</text>
</g><g clip-path="url(#valclip)">
<text x="1162.00" y="263.20" fill="#1c1c1c" font-size="19.42" textLength="291.91" lengthAdjust="spacingAndGlyphs">&quot;TemperatureTrigger.newState&quot;</text>
<text x="1459.84" y="263.20" fill="#1c1c1c" font-size="19.42" textLength="106.59" lengthAdjust="spacingAndGlyphs">(id=18670)</text>
</g>
<path d="M932 283.5 L944 283.5 L938 289.5 Z" fill="#777"/>
<g transform="translate(948.5,277)"><path d="M5 10.8 L8 5.6 L11 10.8 Z" fill="#f4f8fc" stroke="#2c6fb6" stroke-width="1.4" stroke-linejoin="miter"/></g>
<g clip-path="url(#nameclip)">
<text x="966.00" y="292.20" fill="#1c1c1c" font-size="19.42" textLength="50.98" lengthAdjust="spacingAndGlyphs">value</text>
</g><g clip-path="url(#valclip)">
<text x="1162.00" y="292.20" fill="#1c1c1c" font-size="19.42" textLength="118.94" lengthAdjust="spacingAndGlyphs">DecimalType</text>
<text x="1292.81" y="292.20" fill="#1c1c1c" font-size="19.42" textLength="106.59" lengthAdjust="spacingAndGlyphs">(id=18671)</text>
</g>
<path d="M953 309.5 L959 315.5 L953 321.5 Z" fill="#777"/>
<g transform="translate(966.5,306)"><path d="M8 5.2 L11.3 8.5 L8 11.8 L4.7 8.5 Z" fill="#fff" stroke="#d4a020" stroke-width="1.3"/></g>
<g clip-path="url(#nameclip)">
<text x="984.00" y="321.20" fill="#1c1c1c" font-size="19.42" textLength="50.98" lengthAdjust="spacingAndGlyphs">value</text>
</g><g clip-path="url(#valclip)">
<text x="1162.00" y="321.20" fill="#1c1c1c" font-size="19.42" textLength="105.91" lengthAdjust="spacingAndGlyphs">BigDecimal</text>
<text x="1279.78" y="321.20" fill="#1c1c1c" font-size="19.42" textLength="106.59" lengthAdjust="spacingAndGlyphs">(id=18672)</text>
</g>
<path d="M917 338.5 L923 344.5 L917 350.5 Z" fill="#777"/>
<g transform="translate(932.5,335)"><path d="M3 10 L6 5 L9 10 Z" fill="none" stroke="#2c6fb6" stroke-width="1.3"/></g><g transform="translate(932.5,335)"><path d="M10.5 9 V15.5 H12.5 M10.5 12 H12.5" stroke="#3a5ab0" stroke-width="1" fill="none"/><rect x="12.3" y="10.2" width="3.6" height="3.4" fill="#fff" stroke="#e03048" stroke-width="1.2"/><rect x="12.3" y="14" width="3.6" height="3.4" fill="#fff" stroke="#e03048" stroke-width="1.2"/></g>
<g clip-path="url(#nameclip)">
<text x="948.00" y="350.20" fill="#1c1c1c" font-size="19.42" textLength="26.44" lengthAdjust="spacingAndGlyphs">[1]</text>
</g><g clip-path="url(#valclip)">
<text x="1162.00" y="350.20" fill="#1c1c1c" font-size="19.42" textLength="209.16" lengthAdjust="spacingAndGlyphs">HashMap$Node&lt;K,V&gt;</text>
<text x="1383.03" y="350.20" fill="#1c1c1c" font-size="19.42" textLength="106.59" lengthAdjust="spacingAndGlyphs">(id=18663)</text>
</g>
<path d="M917 367.5 L923 373.5 L917 379.5 Z" fill="#777"/>
<g transform="translate(932.5,364)"><path d="M3 10 L6 5 L9 10 Z" fill="none" stroke="#2c6fb6" stroke-width="1.3"/></g><g transform="translate(932.5,364)"><path d="M10.5 9 V15.5 H12.5 M10.5 12 H12.5" stroke="#3a5ab0" stroke-width="1" fill="none"/><rect x="12.3" y="10.2" width="3.6" height="3.4" fill="#fff" stroke="#e03048" stroke-width="1.2"/><rect x="12.3" y="14" width="3.6" height="3.4" fill="#fff" stroke="#e03048" stroke-width="1.2"/></g>
<g clip-path="url(#nameclip)">
<text x="948.00" y="379.20" fill="#1c1c1c" font-size="19.42" textLength="26.44" lengthAdjust="spacingAndGlyphs">[2]</text>
</g><g clip-path="url(#valclip)">
<text x="1162.00" y="379.20" fill="#1c1c1c" font-size="19.42" textLength="209.16" lengthAdjust="spacingAndGlyphs">HashMap$Node&lt;K,V&gt;</text>
<text x="1383.03" y="379.20" fill="#1c1c1c" font-size="19.42" textLength="106.59" lengthAdjust="spacingAndGlyphs">(id=18664)</text>
</g>
<path d="M917 396.5 L923 402.5 L917 408.5 Z" fill="#777"/>
<g transform="translate(932.5,393)"><path d="M3 10 L6 5 L9 10 Z" fill="none" stroke="#2c6fb6" stroke-width="1.3"/></g><g transform="translate(932.5,393)"><path d="M10.5 9 V15.5 H12.5 M10.5 12 H12.5" stroke="#3a5ab0" stroke-width="1" fill="none"/><rect x="12.3" y="10.2" width="3.6" height="3.4" fill="#fff" stroke="#e03048" stroke-width="1.2"/><rect x="12.3" y="14" width="3.6" height="3.4" fill="#fff" stroke="#e03048" stroke-width="1.2"/></g>
<g clip-path="url(#nameclip)">
<text x="948.00" y="408.20" fill="#1c1c1c" font-size="19.42" textLength="26.44" lengthAdjust="spacingAndGlyphs">[3]</text>
</g><g clip-path="url(#valclip)">
<text x="1162.00" y="408.20" fill="#1c1c1c" font-size="19.42" textLength="209.16" lengthAdjust="spacingAndGlyphs">HashMap$Node&lt;K,V&gt;</text>
<text x="1383.03" y="408.20" fill="#1c1c1c" font-size="19.42" textLength="106.59" lengthAdjust="spacingAndGlyphs">(id=18665)</text>
</g>
<path d="M917 425.5 L923 431.5 L917 437.5 Z" fill="#777"/>
<g transform="translate(932.5,422)"><path d="M3 10 L6 5 L9 10 Z" fill="none" stroke="#2c6fb6" stroke-width="1.3"/></g><g transform="translate(932.5,422)"><path d="M10.5 9 V15.5 H12.5 M10.5 12 H12.5" stroke="#3a5ab0" stroke-width="1" fill="none"/><rect x="12.3" y="10.2" width="3.6" height="3.4" fill="#fff" stroke="#e03048" stroke-width="1.2"/><rect x="12.3" y="14" width="3.6" height="3.4" fill="#fff" stroke="#e03048" stroke-width="1.2"/></g>
<g clip-path="url(#nameclip)">
<text x="948.00" y="437.20" fill="#1c1c1c" font-size="19.42" textLength="26.44" lengthAdjust="spacingAndGlyphs">[4]</text>
</g><g clip-path="url(#valclip)">
<text x="1162.00" y="437.20" fill="#1c1c1c" font-size="19.42" textLength="209.16" lengthAdjust="spacingAndGlyphs">HashMap$Node&lt;K,V&gt;</text>
<text x="1383.03" y="437.20" fill="#1c1c1c" font-size="19.42" textLength="106.59" lengthAdjust="spacingAndGlyphs">(id=18666)</text>
</g>
<path d="M917 454.5 L923 460.5 L917 466.5 Z" fill="#777"/>
<g transform="translate(932.5,451)"><path d="M3 10 L6 5 L9 10 Z" fill="none" stroke="#2c6fb6" stroke-width="1.3"/></g><g transform="translate(932.5,451)"><path d="M10.5 9 V15.5 H12.5 M10.5 12 H12.5" stroke="#3a5ab0" stroke-width="1" fill="none"/><rect x="12.3" y="10.2" width="3.6" height="3.4" fill="#fff" stroke="#e03048" stroke-width="1.2"/><rect x="12.3" y="14" width="3.6" height="3.4" fill="#fff" stroke="#e03048" stroke-width="1.2"/></g>
<g clip-path="url(#nameclip)">
<text x="948.00" y="466.20" fill="#1c1c1c" font-size="19.42" textLength="26.44" lengthAdjust="spacingAndGlyphs">[5]</text>
</g><g clip-path="url(#valclip)">
<text x="1162.00" y="466.20" fill="#1c1c1c" font-size="19.42" textLength="209.16" lengthAdjust="spacingAndGlyphs">HashMap$Node&lt;K,V&gt;</text>
<text x="1383.03" y="466.20" fill="#1c1c1c" font-size="19.42" textLength="106.59" lengthAdjust="spacingAndGlyphs">(id=18667)</text>
</g>
<path d="M917 483.5 L923 489.5 L917 495.5 Z" fill="#777"/>
<g transform="translate(932.5,480)"><path d="M3 10 L6 5 L9 10 Z" fill="none" stroke="#2c6fb6" stroke-width="1.3"/></g><g transform="translate(932.5,480)"><path d="M10.5 9 V15.5 H12.5 M10.5 12 H12.5" stroke="#3a5ab0" stroke-width="1" fill="none"/><rect x="12.3" y="10.2" width="3.6" height="3.4" fill="#fff" stroke="#e03048" stroke-width="1.2"/><rect x="12.3" y="14" width="3.6" height="3.4" fill="#fff" stroke="#e03048" stroke-width="1.2"/></g>
<g clip-path="url(#nameclip)">
<text x="948.00" y="495.20" fill="#1c1c1c" font-size="19.42" textLength="26.44" lengthAdjust="spacingAndGlyphs">[6]</text>
</g><g clip-path="url(#valclip)">
<text x="1162.00" y="495.20" fill="#1c1c1c" font-size="19.42" textLength="209.16" lengthAdjust="spacingAndGlyphs">HashMap$Node&lt;K,V&gt;</text>
<text x="1383.03" y="495.20" fill="#1c1c1c" font-size="19.42" textLength="106.59" lengthAdjust="spacingAndGlyphs">(id=18668)</text>
</g>
<path d="M896 515.5 L908 515.5 L902 521.5 Z" fill="#777"/>
<g transform="translate(912.5,509)"><circle cx="8" cy="8.5" r="4.5" fill="#8e8e8e" stroke="#6e6e6e" stroke-width="0.6"/><path d="M6.8 6.2 V10.6 H9.8" stroke="#fff" stroke-width="1.3" fill="none"/></g>
<g clip-path="url(#nameclip)">
<text x="930.00" y="524.20" fill="#1c1c1c" font-size="19.42" textLength="42.16" lengthAdjust="spacingAndGlyphs">item</text>
</g><g clip-path="url(#valclip)">
<text x="1162.00" y="524.20" fill="#1c1c1c" font-size="19.42" textLength="117.42" lengthAdjust="spacingAndGlyphs">NumberItem</text>
<text x="1291.30" y="524.20" fill="#1c1c1c" font-size="19.42" textLength="106.59" lengthAdjust="spacingAndGlyphs">(id=18633)</text>
</g>
<g transform="translate(930.5,538)"><path d="M8 5.2 L11.3 8.5 L8 11.8 L4.7 8.5 Z" fill="#fff" stroke="#d4a020" stroke-width="1.3"/></g>
<g clip-path="url(#nameclip)">
<text x="948.00" y="553.20" fill="#1c1c1c" font-size="19.42" textLength="82.47" lengthAdjust="spacingAndGlyphs">category</text>
</g><g clip-path="url(#valclip)">
<text x="1162.00" y="553.20" fill="#1c1c1c" font-size="19.42" textLength="34.03" lengthAdjust="spacingAndGlyphs">null</text>
</g>
<path d="M917 570.5 L923 576.5 L917 582.5 Z" fill="#777"/>
<g transform="translate(930.5,567)"><rect x="5.8" y="6.2" width="4.8" height="4.8" fill="#fff" stroke="#d83048" stroke-width="1.4"/></g>
<g clip-path="url(#nameclip)">
<text x="948.00" y="582.20" fill="#1c1c1c" font-size="19.42" textLength="268.36" lengthAdjust="spacingAndGlyphs">commandDescriptionService</text>
</g><g clip-path="url(#valclip)">
<text x="1162.00" y="582.20" fill="#1c1c1c" font-size="19.42" textLength="311.84" lengthAdjust="spacingAndGlyphs">CommandDescriptionServiceImpl</text>
<text x="1485.72" y="582.20" fill="#1c1c1c" font-size="19.42" textLength="106.59" lengthAdjust="spacingAndGlyphs">(id=18636)</text>
</g>
<g transform="translate(930.5,596)"><rect x="5.8" y="6.2" width="4.8" height="4.8" fill="#fff" stroke="#d83048" stroke-width="1.4"/></g>
<g clip-path="url(#nameclip)">
<text x="948.00" y="611.20" fill="#1c1c1c" font-size="19.42" textLength="96.67" lengthAdjust="spacingAndGlyphs">dimension</text>
</g><g clip-path="url(#valclip)">
<text x="1162.00" y="611.20" fill="#1c1c1c" font-size="19.42" textLength="34.03" lengthAdjust="spacingAndGlyphs">null</text>
</g>
<path d="M917 628.5 L923 634.5 L917 640.5 Z" fill="#777"/>
<g transform="translate(930.5,625)"><path d="M8 5.2 L11.3 8.5 L8 11.8 L4.7 8.5 Z" fill="#fff" stroke="#d4a020" stroke-width="1.3"/></g>
<g clip-path="url(#nameclip)">
<text x="948.00" y="640.20" fill="#1c1c1c" font-size="19.42" textLength="138.83" lengthAdjust="spacingAndGlyphs">eventPublisher</text>
</g><g clip-path="url(#valclip)">
<text x="1162.00" y="640.20" fill="#1c1c1c" font-size="19.42" textLength="185.30" lengthAdjust="spacingAndGlyphs">OSGiEventPublisher</text>
<text x="1359.17" y="640.20" fill="#1c1c1c" font-size="19.42" textLength="106.59" lengthAdjust="spacingAndGlyphs">(id=18637)</text>
</g>
<rect x="892" y="655" width="684" height="46" fill="#d6d6d6" shape-rendering="crispEdges"/>
<rect x="893.5" y="659.5" width="700" height="36" rx="3" fill="#d1d1d1" stroke="#a6a6a6" stroke-width="1"/>
<text x="904.00" y="683.80" fill="#444" font-size="19.42" textLength="84.53" lengthAdjust="spacingAndGlyphs">&lt;Choose</text>
<text x="1000.19" y="683.80" fill="#444" font-size="19.42" text-anchor="middle">a</text>
<text x="1011.84" y="683.80" fill="#444" font-size="19.42" textLength="96.03" lengthAdjust="spacingAndGlyphs">previously</text>
<text x="1113.81" y="683.80" fill="#444" font-size="19.42" textLength="72.70" lengthAdjust="spacingAndGlyphs">entered</text>
<text x="1192.45" y="683.80" fill="#444" font-size="19.42" textLength="116.30" lengthAdjust="spacingAndGlyphs">expression&gt;</text>
<rect x="892" y="701" width="684" height="50" fill="#fcfcfc" shape-rendering="crispEdges"/>
<text x="894.50" y="716.00" fill="#222" font-size="16.64" textLength="283.31" lengthAdjust="spacingAndGlyphs">TemperatureTrigger.newState=37.2</text>
<rect x="4" y="751" width="1572" height="13" fill="#efeeec" shape-rendering="crispEdges"/>
<rect x="0" y="751" width="3" height="13" fill="#fbfbfb" shape-rendering="crispEdges"/>
<line x1="3.5" y1="751" x2="3.5" y2="764" stroke="#cfcac5" stroke-width="1" shape-rendering="crispEdges"/>
<rect x="4" y="751" width="4.5" height="13" fill="#f3f2f0" shape-rendering="crispEdges"/>
<line x1="9" y1="755.5" x2="886" y2="755.5" stroke="#cfc8c2" stroke-width="1" shape-rendering="crispEdges"/>
<line x1="891" y1="755.5" x2="1576" y2="755.5" stroke="#cfc8c2" stroke-width="1" shape-rendering="crispEdges"/>
<rect x="9" y="756" width="122" height="8" fill="#f6f4f2" shape-rendering="crispEdges"/>
<rect x="131" y="756" width="755" height="8" fill="#e8e6e4" shape-rendering="crispEdges"/>
<rect x="892" y="756" width="684" height="8" fill="#e6e5e3" shape-rendering="crispEdges"/>
<rect x="886" y="751" width="6" height="13" fill="#efeeec" shape-rendering="crispEdges"/>
<rect x="886" y="756" width="6" height="8" fill="#e6e5e3" shape-rendering="crispEdges"/>
<line x1="8.5" y1="755" x2="8.5" y2="764" stroke="#cfc8c2" stroke-width="1" shape-rendering="crispEdges"/>
</svg></body></html>
